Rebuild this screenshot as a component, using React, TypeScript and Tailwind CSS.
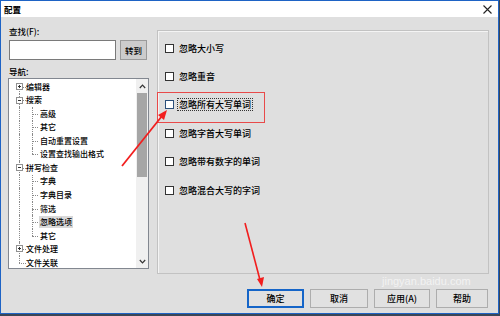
import React from 'react';

const FONT = { fontFamily: '"Noto Sans CJK SC", "Microsoft YaHei", sans-serif' };

type Row = {
  label: string;
  level: 0 | 1;
  box?: '+' | '-';
  trunk?: 'top' | 'mid' | 'bottom';
  branch?: 'mid' | 'last';
  selected?: boolean;
};

const rows: Row[] = [
  { label: '编辑器', level: 0, box: '+', trunk: 'top' },
  { label: '搜索', level: 0, box: '-', trunk: 'mid' },
  { label: '高级', level: 1, trunk: 'mid', branch: 'mid' },
  { label: '其它', level: 1, trunk: 'mid', branch: 'mid' },
  { label: '自动重置设置', level: 1, trunk: 'mid', branch: 'mid' },
  { label: '设置查找输出格式', level: 1, trunk: 'mid', branch: 'last' },
  { label: '拼写检查', level: 0, box: '-', trunk: 'mid' },
  { label: '字典', level: 1, trunk: 'mid', branch: 'mid' },
  { label: '字典目录', level: 1, trunk: 'mid', branch: 'mid' },
  { label: '筛选', level: 1, trunk: 'mid', branch: 'mid' },
  { label: '忽略选项', level: 1, trunk: 'mid', branch: 'mid', selected: true },
  { label: '其它', level: 1, trunk: 'mid', branch: 'last' },
  { label: '文件处理', level: 0, box: '+', trunk: 'mid' },
  { label: '文件关联', level: 0, trunk: 'bottom' },
];

const TreeRow = ({ row }: { row: Row }) => (
  <div className="relative h-[13.54px] flex items-center">
    {/* trunk line */}
    <span
      className={`absolute left-[10px] w-0 border-l border-dotted border-[#8a8a8a] ${
        row.trunk === 'top' ? 'top-1/2 bottom-0' : row.trunk === 'bottom' ? 'top-0 bottom-1/2' : 'top-0 bottom-0'
      }`}
    />
    {row.level === 0 && (
      <>
        <span className="absolute left-[10px] top-1/2 w-[7px] border-t border-dotted border-[#8a8a8a]" />
        {row.box && (
          <span className="absolute left-[7px] top-[3px] w-[7px] h-[7px] bg-white border border-[#919191] flex items-center justify-center">
            <span className="absolute w-[3px] h-px bg-[#333]" />
            {row.box === '+' && <span className="absolute w-px h-[3px] bg-[#333]" />}
          </span>
        )}
        <span className="absolute left-[17px] text-[8px] leading-none font-medium text-black">{row.label}</span>
      </>
    )}
    {row.level === 1 && (
      <>
        <span
          className={`absolute left-[23px] w-0 border-l border-dotted border-[#8a8a8a] ${
            row.branch === 'last' ? 'top-0 bottom-1/2' : 'top-0 bottom-0'
          }`}
        />
        <span className="absolute left-[23px] top-1/2 w-[6px] border-t border-dotted border-[#8a8a8a]" />
        <span
          className={`absolute left-[30px] text-[8px] leading-none font-medium text-black px-px py-[2px] ${
            row.selected ? 'bg-[#d9d9d9]' : ''
          }`}
        >
          {row.label}
        </span>
      </>
    )}
  </div>
);

const Check = ({ label, focused = false }: { label: string; focused?: boolean }) => (
  <div className="h-[28.4px] flex items-center gap-[3px]">
    <span className={`w-[9px] h-[9px] bg-white border ${focused ? 'border-[#2b4f7a]' : 'border-[#333]'}`} />
    <span
      className={`text-[9px] leading-none font-medium text-black ${
        focused ? 'border border-dotted border-[#333] px-px py-[1px]' : 'px-[2px]'
      }`}
    >
      {label}
    </span>
  </div>
);

const Btn = ({ label, width, primary = false }: { label: string; width: string; primary?: boolean }) => (
  <button
    className={`${width} h-[19px] flex items-center justify-center text-[9px] font-medium text-black bg-[#e1e1e1] ${
      primary ? 'border-2 border-[#1565c8]' : 'border border-[#adadad]'
    }`}
  >
    {label}
  </button>
);

export default function App() {
  return (
    <div className="w-[500px] h-[316px] bg-[#3b4656] overflow-hidden relative" style={FONT}>
      <div className="w-[499px] h-[314px] border border-[#1e63c5] bg-[#dfdfdf] flex flex-col">
        {/* Title bar */}
        <div className="h-[16px] bg-white flex items-center justify-between pl-[3px] pr-[6px]">
          <span className="text-[8.5px] font-bold text-black leading-none">配置</span>
          <svg width="9" height="9" viewBox="0 0 9 9">
            <path d="M0.5 0.5 L8.5 8.5 M8.5 0.5 L0.5 8.5" stroke="#222" strokeWidth="1.1" />
          </svg>
        </div>

        {/* Body */}
        <div className="flex-1 flex pl-[7px] pr-[8px]">
          <div className="w-[141px] flex flex-col pt-[8px]">
            <div className="text-[8.5px] leading-[12px] font-medium text-black pl-px">查找(F):</div>
            <div className="flex gap-[4px] mt-[3px] pl-px">
              <div className="w-[107px] h-[20px] bg-white border border-[#7a7a7a]" />
              <button className="w-[27px] h-[20px] bg-[#cccccc] border border-[#9a9a9a] text-[8.5px] font-medium text-black flex items-center justify-center">
                转到
              </button>
            </div>
            <div className="text-[8.5px] leading-[12px] font-medium text-black pl-px mt-[5px]">导航:</div>
            <div className="mt-px h-[191px] bg-white border border-[#828790] flex">
              <div className="flex-1 pt-px">
                {rows.map((r, i) => (
                  <TreeRow key={i} row={r} />
                ))}
              </div>
              <div className="w-[12px] bg-[#f0f0f0] flex flex-col items-center">
                <div className="h-[14px] flex items-center justify-center">
                  <svg width="7" height="5" viewBox="0 0 7 5">
                    <path d="M0.8 4 L3.5 1.2 L6.2 4" fill="none" stroke="#333" strokeWidth="1.2" />
                  </svg>
                </div>
                <div className="w-[10px] h-[84px] bg-[#a6a6a6]" />
                <div className="flex-1" />
                <div className="h-[14px] flex items-center justify-center">
                  <svg width="7" height="5" viewBox="0 0 7 5">
                    <path d="M0.8 1 L3.5 3.8 L6.2 1" fill="none" stroke="#333" strokeWidth="1.2" />
                  </svg>
                </div>
              </div>
            </div>
          </div>

          <div className="ml-[8px] mt-[13px] w-[332px] h-[244px] border border-[#c2c2c2] shadow-[inset_1px_1px_0_#f4f4f4] pl-[7px] pt-[3px] flex flex-col">
            <Check label="忽略大小写" />
            <Check label="忽略重音" />
            <Check label="忽略所有大写单词" focused />
            <Check label="忽略字首大写单词" />
            <Check label="忽略带有数字的单词" />
            <Check label="忽略混合大写的字词" />
          </div>
        </div>

        {/* Buttons */}
        <div className="flex justify-end gap-[6px] pr-[10px] pb-[5px]">
          <Btn label="确定" width="w-[57px]" primary />
          <Btn label="取消" width="w-[58px]" />
          <Btn label="应用(A)" width="w-[56px]" />
          <Btn label="帮助" width="w-[52px]" />
        </div>
      </div>

      {/* Annotations */}
      <div className="absolute left-[157px] top-[92px] w-[108px] h-[31px] border border-[#e84a4a] pointer-events-none" />
      <svg className="absolute inset-0 pointer-events-none" width="500" height="316" viewBox="0 0 500 316">
        <path d="M122 166 L162 116" stroke="#f21e1e" strokeWidth="1.8" fill="none" />
        <path d="M167 110 L158 115 L164 120 Z" fill="#f21e1e" />
        <path d="M245 223 L260 280" stroke="#f21e1e" strokeWidth="1.6" fill="none" />
        <path d="M262 287 L257 279 L264 277 Z" fill="#f21e1e" />
      </svg>
      <div className="absolute left-[382px] top-[275px] text-[11px] leading-[12px] text-white/60 pointer-events-none" style={{ fontFamily: '"Liberation Sans", sans-serif' }}>
        jingyan.baidu.com
      </div>
    </div>
  );
}
